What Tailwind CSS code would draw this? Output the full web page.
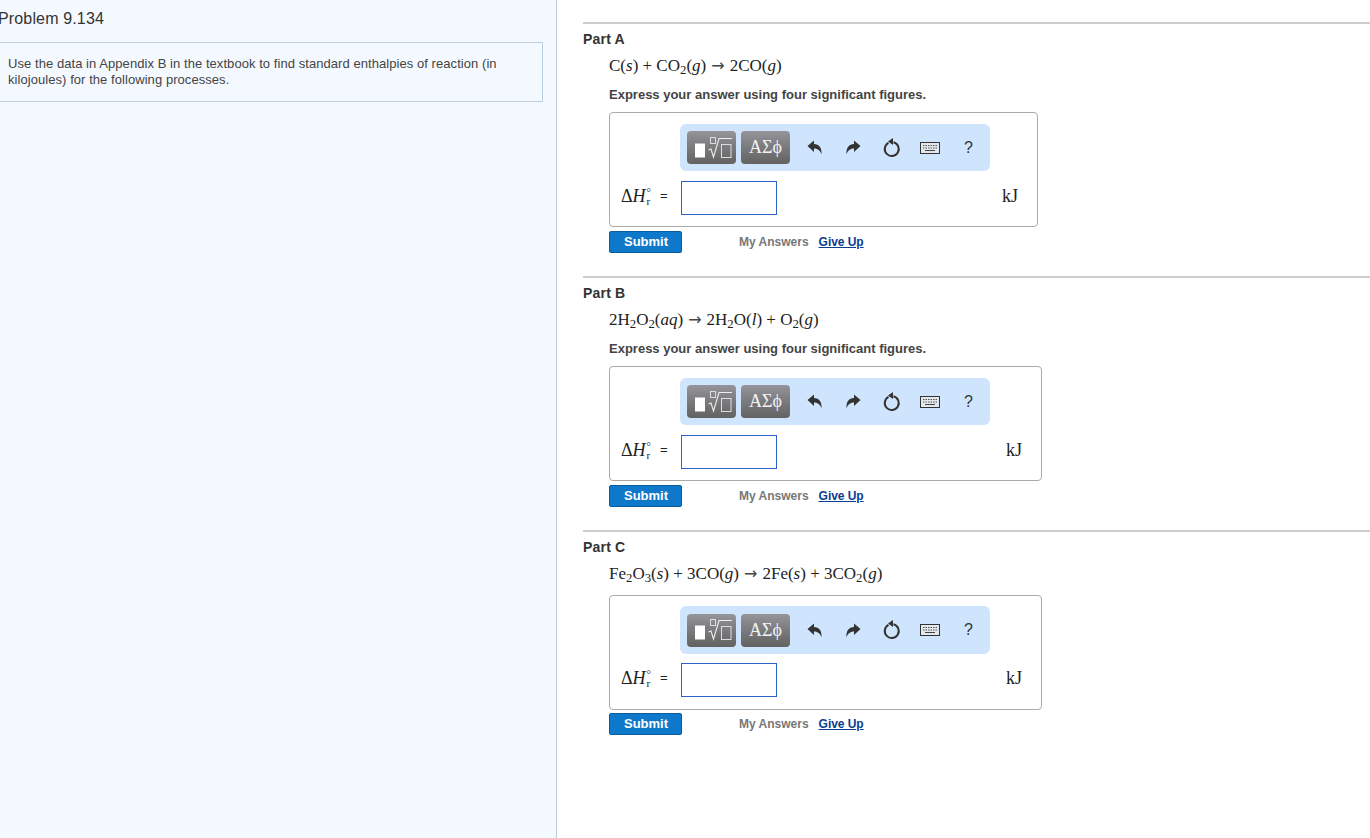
<!DOCTYPE html>
<html lang="en">
<head>
  <meta charset="UTF-8" />
  <title>Problem 9.134</title>
  <script src="https://cdn.jsdelivr.net/npm/@tailwindcss/browser@4"></script>
</head>
<body class="bg-white h-[838px] overflow-hidden font-['Liberation_Sans',Arial,sans-serif] text-[#333]">
  <div class="flex h-[838px]">

    <!-- Left panel -->
    <aside class="w-[557px] shrink-0 h-full bg-[#f4f9ff] border-r border-[#b9cbdc] overflow-hidden">
      <h1 class="text-[16px] leading-[20px] tracking-[0.15px] text-[#333] ml-[-2px] mt-[9px]">Problem 9.134</h1>
      <div class="mt-[13px] w-[543px] h-[60px] border border-l-0 border-[#bccfe0] pl-[8px] pt-[13px] pr-[30px] text-[13px] leading-[16px] tracking-[0.06px] text-[#444]">
        Use the data in Appendix B in the textbook to find standard enthalpies of reaction (in kilojoules) for the following processes.
      </div>
    </aside>

    <!-- Right panel -->
    <main class="flex-1 pl-[26px] pt-[22px] min-w-0">

      <!-- Part A -->
      <section class="border-t-2 border-[#cccccc] mb-[23px]">
        <h2 class="text-[14px] h-[30px] leading-[31px] tracking-[0.2px] font-bold text-[#333]">Part A</h2>
        <div class="ml-[26px] h-[24px] leading-[24px] text-[17px] font-['Liberation_Serif',serif] text-[#222]">C(<i>s</i>) + CO<sub>2</sub>(<i>g</i>)<span class="mx-[5px] font-['DejaVu_Sans',sans-serif] text-[16px] text-[#444]">→</span>2CO(<i>g</i>)</div>
        <p class="ml-[26px] mt-[6px] h-[20px] text-[13px] leading-[21px] font-bold text-[#444]">Express your answer using four significant figures.</p>
        <div class="ml-[26px] mt-[8px] w-[429px] h-[115px] border border-[#aaaaaa] rounded-[4px] pt-[11px]">
          <div class="ml-[70px] w-[310px] h-[47px] bg-[#cfe4fd] rounded-[6px] flex items-center pl-[7px]">
            <div class="w-[49px] h-[33px] rounded-[4px] bg-linear-to-b from-[#94949a] to-[#626262] flex items-center justify-center">
              <svg width="44" height="30" viewBox="0 0 44 30" fill="none"><rect x="5" y="10.500" width="10" height="14" fill="#fff"/><rect x="20.500" y="4.500" width="5" height="6" stroke="#ddd"/><path d="M18.500 17l2.500-1 2.500 8 5.500-18.500h13" stroke="#eee" stroke-width="1.100"/><rect x="31.500" y="11.500" width="9.500" height="13" stroke="#ddd"/></svg>
            </div>
            <div class="ml-[5px] w-[49px] h-[33px] rounded-[4px] bg-linear-to-b from-[#94949a] to-[#626262] flex items-center justify-center text-[#f2f2f2] text-[18px] font-['Liberation_Serif',serif]">ΑΣϕ</div>
            <svg class="ml-[17px]" width="15" height="15" viewBox="0 0 15 15"><path d="M.5 6L7 .5V4c5 0 8 3.500 7.500 10.500C13.500 11 11 8.500 7 8.500V12z" fill="#333"/></svg>
            <svg class="ml-[24px]" width="15" height="15" viewBox="0 0 15 15"><path d="M14.500 6L8 .5V4C3 4 0 7.500.5 14.500 1.500 11 4 8.500 8 8.500V12z" fill="#333"/></svg>
            <svg class="ml-[22px]" width="18" height="20" viewBox="0 0 18 20" fill="none"><path d="M5.500 4.800a7 7 0 1 0 5-.6" stroke="#333" stroke-width="2"/><path d="M10 0v7l-5-3.500z" fill="#333"/></svg>
            <svg class="ml-[19px]" width="20" height="12" viewBox="0 0 20 12" fill="none"><rect x=".5" y=".5" width="19" height="11" fill="#e4e8ec" stroke="#333"/><path d="M3 3.500h14M3 6h14" stroke="#555" stroke-dasharray="1.500 1"/><path d="M5 8.500h10" stroke="#444"/></svg>
            <span class="ml-[24px] text-[16px] text-[#333]">?</span>
          </div>
          <div class="mt-[10px] flex items-center pl-[11px] pr-[19px]">
            <div class="w-[60px] flex items-center mb-[4px] font-['Liberation_Serif',serif] text-[18px] text-[#222]">Δ<i>H</i><span class="inline-flex flex-col text-[11px] leading-[9px] mt-[1px] ml-[1px]"><span>°</span><span>r</span></span><span class="ml-[9px] font-['Liberation_Sans',sans-serif] text-[13px]">=</span></div>
            <div class="w-[96px] h-[34px] border border-[#2d62c8] bg-white"></div>
            <span class="ml-auto mb-[4px] font-['Liberation_Serif',serif] text-[18px] text-[#222]">kJ</span>
          </div>
        </div>
        <div class="ml-[26px] mt-[4px] h-[22px] flex items-center">
          <button class="w-[73px] h-[22px] pl-[1px] bg-[#0e79cb] border border-[#0b5c9c] rounded-[2px] text-white text-[13px] font-bold">Submit</button>
          <span class="ml-[57px] text-[12px] font-bold text-[#777]">My Answers</span>
          <a class="ml-[10px] text-[12px] tracking-[-0.05px] font-bold text-[#0a3d8f] underline">Give Up</a>
        </div>
      </section>

      <!-- Part B -->
      <section class="border-t-2 border-[#cccccc] mb-[23px]">
        <h2 class="text-[14px] h-[30px] leading-[31px] tracking-[0.2px] font-bold text-[#333]">Part B</h2>
        <div class="ml-[26px] h-[24px] leading-[24px] text-[17px] font-['Liberation_Serif',serif] text-[#222]">2H<sub>2</sub>O<sub>2</sub>(<i>aq</i>)<span class="mx-[5px] font-['DejaVu_Sans',sans-serif] text-[16px] text-[#444]">→</span>2H<sub>2</sub>O(<i>l</i>) + O<sub>2</sub>(<i>g</i>)</div>
        <p class="ml-[26px] mt-[6px] h-[20px] text-[13px] leading-[21px] font-bold text-[#444]">Express your answer using four significant figures.</p>
        <div class="ml-[26px] mt-[8px] w-[433px] h-[115px] border border-[#aaaaaa] rounded-[4px] pt-[11px]">
          <div class="ml-[70px] w-[310px] h-[47px] bg-[#cfe4fd] rounded-[6px] flex items-center pl-[7px]">
            <div class="w-[49px] h-[33px] rounded-[4px] bg-linear-to-b from-[#94949a] to-[#626262] flex items-center justify-center">
              <svg width="44" height="30" viewBox="0 0 44 30" fill="none"><rect x="5" y="10.500" width="10" height="14" fill="#fff"/><rect x="20.500" y="4.500" width="5" height="6" stroke="#ddd"/><path d="M18.500 17l2.500-1 2.500 8 5.500-18.500h13" stroke="#eee" stroke-width="1.100"/><rect x="31.500" y="11.500" width="9.500" height="13" stroke="#ddd"/></svg>
            </div>
            <div class="ml-[5px] w-[49px] h-[33px] rounded-[4px] bg-linear-to-b from-[#94949a] to-[#626262] flex items-center justify-center text-[#f2f2f2] text-[18px] font-['Liberation_Serif',serif]">ΑΣϕ</div>
            <svg class="ml-[17px]" width="15" height="15" viewBox="0 0 15 15"><path d="M.5 6L7 .5V4c5 0 8 3.500 7.500 10.500C13.500 11 11 8.500 7 8.500V12z" fill="#333"/></svg>
            <svg class="ml-[24px]" width="15" height="15" viewBox="0 0 15 15"><path d="M14.500 6L8 .5V4C3 4 0 7.500.5 14.500 1.500 11 4 8.500 8 8.500V12z" fill="#333"/></svg>
            <svg class="ml-[22px]" width="18" height="20" viewBox="0 0 18 20" fill="none"><path d="M5.500 4.800a7 7 0 1 0 5-.6" stroke="#333" stroke-width="2"/><path d="M10 0v7l-5-3.500z" fill="#333"/></svg>
            <svg class="ml-[19px]" width="20" height="12" viewBox="0 0 20 12" fill="none"><rect x=".5" y=".5" width="19" height="11" fill="#e4e8ec" stroke="#333"/><path d="M3 3.500h14M3 6h14" stroke="#555" stroke-dasharray="1.500 1"/><path d="M5 8.500h10" stroke="#444"/></svg>
            <span class="ml-[24px] text-[16px] text-[#333]">?</span>
          </div>
          <div class="mt-[10px] flex items-center pl-[11px] pr-[19px]">
            <div class="w-[60px] flex items-center mb-[4px] font-['Liberation_Serif',serif] text-[18px] text-[#222]">Δ<i>H</i><span class="inline-flex flex-col text-[11px] leading-[9px] mt-[1px] ml-[1px]"><span>°</span><span>r</span></span><span class="ml-[9px] font-['Liberation_Sans',sans-serif] text-[13px]">=</span></div>
            <div class="w-[96px] h-[34px] border border-[#2d62c8] bg-white"></div>
            <span class="ml-auto mb-[4px] font-['Liberation_Serif',serif] text-[18px] text-[#222]">kJ</span>
          </div>
        </div>
        <div class="ml-[26px] mt-[4px] h-[22px] flex items-center">
          <button class="w-[73px] h-[22px] pl-[1px] bg-[#0e79cb] border border-[#0b5c9c] rounded-[2px] text-white text-[13px] font-bold">Submit</button>
          <span class="ml-[57px] text-[12px] font-bold text-[#777]">My Answers</span>
          <a class="ml-[10px] text-[12px] tracking-[-0.05px] font-bold text-[#0a3d8f] underline">Give Up</a>
        </div>
      </section>

      <!-- Part C -->
      <section class="border-t-2 border-[#cccccc]">
        <h2 class="text-[14px] h-[30px] leading-[31px] tracking-[0.2px] font-bold text-[#333]">Part C</h2>
        <div class="ml-[26px] h-[24px] leading-[24px] text-[17px] font-['Liberation_Serif',serif] text-[#222]">Fe<sub>2</sub>O<sub>3</sub>(<i>s</i>) + 3CO(<i>g</i>)<span class="mx-[5px] font-['DejaVu_Sans',sans-serif] text-[16px] text-[#444]">→</span>2Fe(<i>s</i>) + 3CO<sub>2</sub>(<i>g</i>)</div>
        <div class="ml-[26px] mt-[9px] w-[433px] h-[115px] border border-[#aaaaaa] rounded-[4px] pt-[10px]">
          <div class="ml-[70px] w-[310px] h-[48px] bg-[#cfe4fd] rounded-[6px] flex items-center pl-[7px]">
            <div class="w-[49px] h-[33px] rounded-[4px] bg-linear-to-b from-[#94949a] to-[#626262] flex items-center justify-center">
              <svg width="44" height="30" viewBox="0 0 44 30" fill="none"><rect x="5" y="10.500" width="10" height="14" fill="#fff"/><rect x="20.500" y="4.500" width="5" height="6" stroke="#ddd"/><path d="M18.500 17l2.500-1 2.500 8 5.500-18.500h13" stroke="#eee" stroke-width="1.100"/><rect x="31.500" y="11.500" width="9.500" height="13" stroke="#ddd"/></svg>
            </div>
            <div class="ml-[5px] w-[49px] h-[33px] rounded-[4px] bg-linear-to-b from-[#94949a] to-[#626262] flex items-center justify-center text-[#f2f2f2] text-[18px] font-['Liberation_Serif',serif]">ΑΣϕ</div>
            <svg class="ml-[17px]" width="15" height="15" viewBox="0 0 15 15"><path d="M.5 6L7 .5V4c5 0 8 3.500 7.500 10.500C13.500 11 11 8.500 7 8.500V12z" fill="#333"/></svg>
            <svg class="ml-[24px]" width="15" height="15" viewBox="0 0 15 15"><path d="M14.500 6L8 .5V4C3 4 0 7.500.5 14.500 1.500 11 4 8.500 8 8.500V12z" fill="#333"/></svg>
            <svg class="ml-[22px]" width="18" height="20" viewBox="0 0 18 20" fill="none"><path d="M5.500 4.800a7 7 0 1 0 5-.6" stroke="#333" stroke-width="2"/><path d="M10 0v7l-5-3.500z" fill="#333"/></svg>
            <svg class="ml-[19px]" width="20" height="12" viewBox="0 0 20 12" fill="none"><rect x=".5" y=".5" width="19" height="11" fill="#e4e8ec" stroke="#333"/><path d="M3 3.500h14M3 6h14" stroke="#555" stroke-dasharray="1.500 1"/><path d="M5 8.500h10" stroke="#444"/></svg>
            <span class="ml-[24px] text-[16px] text-[#333]">?</span>
          </div>
          <div class="mt-[9px] flex items-center pl-[11px] pr-[19px]">
            <div class="w-[60px] flex items-center mb-[4px] font-['Liberation_Serif',serif] text-[18px] text-[#222]">Δ<i>H</i><span class="inline-flex flex-col text-[11px] leading-[9px] mt-[1px] ml-[1px]"><span>°</span><span>r</span></span><span class="ml-[9px] font-['Liberation_Sans',sans-serif] text-[13px]">=</span></div>
            <div class="w-[96px] h-[34px] border border-[#2d62c8] bg-white"></div>
            <span class="ml-auto mb-[4px] font-['Liberation_Serif',serif] text-[18px] text-[#222]">kJ</span>
          </div>
        </div>
        <div class="ml-[26px] mt-[3px] h-[22px] flex items-center">
          <button class="w-[73px] h-[22px] pl-[1px] bg-[#0e79cb] border border-[#0b5c9c] rounded-[2px] text-white text-[13px] font-bold">Submit</button>
          <span class="ml-[57px] text-[12px] font-bold text-[#777]">My Answers</span>
          <a class="ml-[10px] text-[12px] tracking-[-0.05px] font-bold text-[#0a3d8f] underline">Give Up</a>
        </div>
      </section>
    </main>
  </div>
</body>
</html>
